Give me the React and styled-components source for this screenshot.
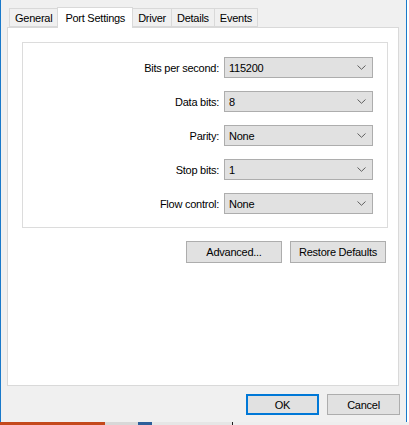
import React from 'react'
import styled, { createGlobalStyle } from 'styled-components'

const GlobalStyle = createGlobalStyle`
  html, body {
    margin: 0;
    padding: 0;
    background: #ffffff;
  }
  body {
    font-family: "Liberation Sans", Arial, sans-serif;
    font-size: 11px;
    letter-spacing: -0.25px;
    color: #000;
  }
`

const Screen = styled.div`
  width: 409px;
  height: 425px;
  display: flex;
  flex-direction: column;
  overflow: hidden;
`

const Window = styled.div`
  width: 407px;
  height: 422px;
  box-sizing: border-box;
  background: #f0f0f0;
  border-left: 1px solid #1979ca;
  border-right: 1px solid #1979ca;
  padding: 7px 0 0 6px;
  display: flex;
  flex-direction: column;
`

const Taskbar = styled.div`
  height: 3px;
  display: flex;
`

const TaskbarPart = styled.div`
  width: ${p => p.w}px;
  background: ${p => p.c};
`

const TabStrip = styled.div`
  display: flex;
  align-items: flex-end;
  height: 20px;
  padding-left: 2px;
  position: relative;
  z-index: 1;
`

const Tab = styled.div`
  box-sizing: border-box;
  height: ${p => (p.active ? 21 : 19)}px;
  margin-bottom: ${p => (p.active ? -1 : 0)}px;
  padding: 0 ${p => (p.active ? 7 : 5)}px;
  margin-left: ${p => (p.first ? 0 : -1)}px;
  border: 1px solid #d9d9d9;
  border-bottom: ${p => (p.active ? 'none' : '1px solid #d9d9d9')};
  background: ${p => (p.active ? '#ffffff' : '#f0f0f0')};
  display: flex;
  align-items: center;
  white-space: nowrap;
`

const Panel = styled.div`
  width: 392px;
  height: 359px;
  box-sizing: border-box;
  background: #ffffff;
  border: 1px solid #d9d9d9;
  padding: 14px 10px 0 14px;
  display: flex;
  flex-direction: column;
`

const GroupBox = styled.div`
  height: 186px;
  box-sizing: border-box;
  border: 1px solid #dcdcdc;
  padding: 14px 14px 0 0;
  display: grid;
  grid-template-columns: 1fr 149px;
  grid-auto-rows: 21px;
  column-gap: 5px;
  row-gap: 13px;
`

const Label = styled.div`
  display: flex;
  align-items: center;
  justify-content: flex-end;
  white-space: nowrap;
`

const Combo = styled.div`
  box-sizing: border-box;
  border: 1px solid #adadad;
  background: #e1e1e1;
  display: flex;
  align-items: center;
  justify-content: space-between;
  padding: 0 6px 0 4px;
`

const ButtonRow = styled.div`
  display: flex;
  justify-content: flex-end;
  gap: 8px;
  margin-top: 13px;
  padding-right: 2px;
`

const Button = styled.div`
  box-sizing: border-box;
  width: ${p => p.w}px;
  height: ${p => p.h || 22}px;
  border: ${p => (p.primary ? '2px solid #0078d7' : '1px solid #adadad')};
  background: #e1e1e1;
  display: flex;
  align-items: center;
  justify-content: center;
  white-space: nowrap;
`

const Footer = styled.div`
  display: flex;
  justify-content: flex-end;
  gap: 8px;
  margin-top: 8px;
  padding-right: 6px;
`

const Chevron = () => (
  <svg width="9" height="5" viewBox="0 0 9 5">
    <path d="M0.5 0.5 L4.5 4.3 L8.5 0.5" fill="none" stroke="#606060" strokeWidth="1" />
  </svg>
)

const fields = [
  ['Bits per second:', '115200'],
  ['Data bits:', '8'],
  ['Parity:', 'None'],
  ['Stop bits:', '1'],
  ['Flow control:', 'None'],
]

const tabs = ['General', 'Port Settings', 'Driver', 'Details', 'Events']

export default function App() {
  return (
    <Screen>
      <GlobalStyle />
      <Window>
        <TabStrip>
          {tabs.map((t, i) => (
            <Tab key={t} first={i === 0} active={t === 'Port Settings'}>{t}</Tab>
          ))}
        </TabStrip>
        <Panel>
          <GroupBox>
            {fields.map(([label, value]) => (
              <React.Fragment key={label}>
                <Label>{label}</Label>
                <Combo>
                  <span>{value}</span>
                  <Chevron />
                </Combo>
              </React.Fragment>
            ))}
          </GroupBox>
          <ButtonRow>
            <Button w={96}>Advanced...</Button>
            <Button w={96}>Restore Defaults</Button>
          </ButtonRow>
        </Panel>
        <Footer>
          <Button w={73} h={21} primary>OK</Button>
          <Button w={73} h={21}>Cancel</Button>
        </Footer>
      </Window>
      <Taskbar>
        <TaskbarPart w={105} c="#c4491c" />
        <TaskbarPart w={33} c="#d8d8d8" />
        <TaskbarPart w={14} c="#2d5f9a" />
        <TaskbarPart w={80} c="#e6e6e6" />
        <TaskbarPart w={1} c="#202020" />
        <TaskbarPart w={176} c="#eeeeee" />
      </Taskbar>
    </Screen>
  )
}
